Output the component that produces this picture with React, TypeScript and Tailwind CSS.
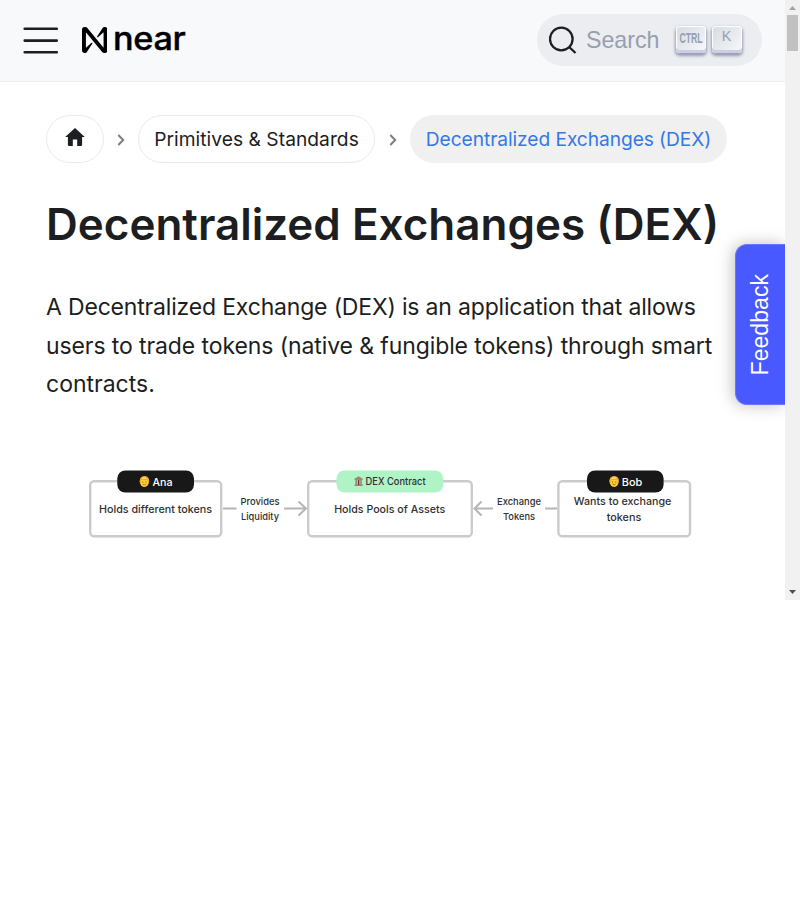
function NearMark() {
  return (
    <svg className="-mt-px h-[26px] w-[25.5px]" viewBox="0 0 24 24" preserveAspectRatio="none" fill="#000">
      <path d="M21.443 0c-.89 0-1.714.46-2.18 1.218l-5.017 7.448a.533.533 0 0 0 .792.7l4.938-4.282a.2.2 0 0 1 .334.151v13.41a.2.2 0 0 1-.354.128L5.03.905A2.555 2.555 0 0 0 3.078 0h-.521A2.557 2.557 0 0 0 0 2.557v18.886a2.557 2.557 0 0 0 4.736 1.338l5.017-7.448a.533.533 0 0 0-.792-.7l-4.938 4.283a.2.2 0 0 1-.333-.152V5.352a.2.2 0 0 1 .354-.128l14.924 17.87c.486.574 1.2.905 1.952.906h.521A2.558 2.558 0 0 0 24 21.445V2.557A2.558 2.558 0 0 0 21.443 0Z" />
    </svg>
  );
}

const keyClass =
  "-mt-px flex h-[27px] w-[30px] shrink-0 items-start justify-center rounded-[4px] bg-linear-[-225deg,#d5dbe4,#f8f8f8] text-[#969faf] shadow-[inset_0_-3px_0_0_#cdcde6,inset_0_0_1px_1px_#fff,0_2px_3px_1px_rgba(30,35,90,0.4)]";

function Navbar() {
  return (
    <header className="flex h-[82px] shrink-0 items-center border-b border-[#eeeff1] bg-[#f7f9fb] pr-[23px] pl-[22px]">
      <button aria-label="Menu" className="h-9 w-9">
        <svg width="38" height="36" viewBox="0 0 38 36" fill="none" stroke="#1c1e21" strokeWidth="2.6" strokeLinecap="round">
          <path d="M2.7 5.8H34.8M2.7 17.6H34.8M2.7 29.2H34.8" />
        </svg>
      </button>
      <a className="ml-[23.5px] flex items-center">
        <NearMark />
        <span className="-mt-[4px] ml-[5.5px] h-9 origin-left scale-x-[1.07] font-['Inter',sans-serif] text-[32px] leading-9 font-medium tracking-[-0.3px] text-black [-webkit-text-stroke:0.4px_#000]">
          near
        </span>
      </a>
      <div className="-mt-px ml-auto flex h-[52px] w-[225px] items-center rounded-full bg-[#ebedf0] pl-3">
        <svg width="28" height="30" viewBox="0 0 28 30" fill="none" stroke="#1c1e21" strokeWidth="2.3">
          <circle cx="12.3" cy="14" r="11.3" />
          <path d="M20.2 22L26.5 28" />
        </svg>
        <span className="ml-[9px] w-[90px] font-['Liberation_Sans',Arial,sans-serif] text-[23.2px] leading-7 text-[#969faf]">
          Search
        </span>
        <span className={keyClass}>
          <span className="origin-center scale-x-[0.58] font-['Liberation_Sans',Arial,sans-serif] text-[15px] leading-6 font-bold">CTRL</span>
        </span>
        <span className={"ml-[5.5px] " + keyClass}>
          <span className="font-['Liberation_Sans',Arial,sans-serif] text-[14.4px] leading-[21px]">K</span>
        </span>
      </div>
    </header>
  );
}

function Chevron() {
  return (
    <svg className="mx-[13px] mt-0.5" width="8" height="12" viewBox="0 0 8 12" fill="none" stroke="#7d7d7d" strokeWidth="2">
      <path d="M1.3 1L6.2 6L1.3 11" />
    </svg>
  );
}

function Breadcrumbs() {
  return (
    <nav className="flex h-12 items-center font-['Inter',sans-serif] text-[19.2px] text-[#1c1e21]">
      <a className="flex h-12 w-[58px] items-center justify-center rounded-full border border-[#ebebeb]">
        <svg className="-mt-1" width="20" height="18" viewBox="0 0 20 18" fill="#1c1e21">
          <path d="M10 0L19.8 9H17.1V16.8Q17.1 18 15.9 18H12.2V11.6H7.8V18H4.1Q2.9 18 2.9 16.8V9H.2Z" />
        </svg>
      </a>
      <Chevron />
      <a className="mr-px flex h-12 w-[237px] items-center justify-center rounded-full border border-[#ebebeb] tracking-[0.04px] whitespace-nowrap">
        Primitives &amp; Standards
      </a>
      <Chevron />
      <a className="flex h-12 w-[317px] items-center justify-center rounded-full bg-[#f0f0f0] tracking-[-0.08px] whitespace-nowrap text-[#3578e5]">
        Decentralized Exchanges (DEX)
      </a>
    </nav>
  );
}

function Face({ x }: { x: number }) {
  return (
    <g transform={`translate(${x} 476)`}>
      <ellipse cx="4.7" cy="5.5" rx="4.7" ry="5.2" fill="#f3b51b" />
      <ellipse cx="4.7" cy="6.2" rx="3.5" ry="4.6" fill="#ffcb38" />
      <path d="M0 6Q-.2 0 4.8 0Q9.8 0 9.4 6Q8.3 5.4 7.8 3.5Q4 4.5 1.6 3.2Q1.3 5.3 0 6Z" fill="#f5a81c" />
      <path d="M2 2.4Q4.6 .2 7.4 2.2Q5 3.5 2 2.4Z" fill="#ffe08a" />
      <circle cx="3.1" cy="6" r=".55" fill="#6b4a16" />
      <circle cx="6.4" cy="6" r=".55" fill="#6b4a16" />
      <path d="M3.2 8.3Q4.7 9.3 6.2 8.3" stroke="#8a5415" strokeWidth=".7" fill="none" />
    </g>
  );
}

function Diagram() {
  return (
    <svg className="block" width="692" height="90" viewBox="46 460 692 90" fontFamily="Inter, sans-serif" textAnchor="middle" fill="#303030">
      <g fill="#fff" stroke="#cbcbcb" strokeWidth="2.4">
        <rect x="90.2" y="481.2" width="131" height="55" rx="4" />
        <rect x="308.2" y="481.2" width="163.6" height="55" rx="4" />
        <rect x="558.4" y="481.2" width="131.6" height="55" rx="4" />
      </g>
      <g fill="none" stroke="#b5b5b5" strokeWidth="2">
        <path d="M223 508.5H236.5M284 508.5H306M298.5 501.5L306 508.5L298.5 515.5" />
        <path d="M493 508.5H474.5M481.5 501.5L474.5 508.5L481.5 515.5M545 508.5H557" />
      </g>
      <rect x="117.3" y="470.5" width="76.7" height="22" rx="8" fill="#181818" />
      <rect x="336.5" y="470.5" width="106.7" height="22" rx="8" fill="#aff4c6" />
      <rect x="587" y="470.5" width="76.6" height="22" rx="8" fill="#181818" />
      <Face x={139.7} />
      <Face x={609.4} />
      <g fill="#a18672">
        <path d="M354.5 478.8L358.6 476.3L362.7 478.8V480H354.5ZM354.5 484.6H362.7V486H354.5Z" />
        <path d="M355.4 480H357V485H355.4ZM360.2 480H361.8V485H360.2Z" />
        <path d="M357.8 480H359.4V485H357.8Z" fill="#5b3e35" />
      </g>
      <g fontSize="11" fontWeight="500">
        <text x="162.5" y="485.6" fill="#fff" textLength="20" lengthAdjust="spacingAndGlyphs">Ana</text>
        <text x="632" y="485.6" fill="#fff" textLength="20.5" lengthAdjust="spacingAndGlyphs">Bob</text>
      </g>
      <text x="395.6" y="485.4" fontSize="10.2" fontWeight="500" textLength="60" lengthAdjust="spacingAndGlyphs">DEX Contract</text>
      <g fontSize="11" fontWeight="500">
        <text x="155.5" y="512.7" textLength="113" lengthAdjust="spacingAndGlyphs">Holds different tokens</text>
        <text x="389.7" y="512.7" textLength="111" lengthAdjust="spacingAndGlyphs">Holds Pools of Assets</text>
        <text x="622.6" y="504.7" textLength="97.5" lengthAdjust="spacingAndGlyphs">Wants to exchange</text>
        <text x="624" y="520.8" textLength="34.5" lengthAdjust="spacingAndGlyphs">tokens</text>
      </g>
      <g fontSize="9.6" fontWeight="500">
        <text x="260" y="505.4" textLength="39" lengthAdjust="spacingAndGlyphs">Provides</text>
        <text x="260" y="519.6" textLength="38" lengthAdjust="spacingAndGlyphs">Liquidity</text>
        <text x="519" y="505.4" textLength="44" lengthAdjust="spacingAndGlyphs">Exchange</text>
        <text x="519" y="519.6" textLength="32" lengthAdjust="spacingAndGlyphs">Tokens</text>
      </g>
    </svg>
  );
}

function Scrollbar() {
  return (
    <div className="flex w-[15px] shrink-0 flex-col items-center bg-[#f1f1f1]">
      <svg width="15" height="15" viewBox="0 0 15 15" fill="#a3a3a3">
        <path d="M4 10H11L7.5 6Z" />
      </svg>
      <div className="h-9 w-[11px] bg-[#c1c1c1]" />
      <svg className="mt-auto" width="15" height="15" viewBox="0 0 15 15" fill="#505050">
        <path d="M4 5H11L7.5 9Z" />
      </svg>
    </div>
  );
}

export default function App() {
  return (
    <div className="h-[900px] w-[800px] bg-white">
      <div className="relative flex h-[600px] overflow-hidden">
        <div className="flex w-[785px] flex-col bg-white">
          <Navbar />
          <main className="flex flex-col pt-[33px] pl-[46px] font-['Inter',sans-serif] text-[#1c1e21]">
            <Breadcrumbs />
            <h1 className="mt-8 text-[44px] leading-[58px] font-semibold whitespace-nowrap">Decentralized Exchanges (DEX)</h1>
            <p className="mt-[35.4px] text-[23px] leading-[38.4px] whitespace-nowrap">
              <span className="tracking-[-0.18px]">A Decentralized Exchange (DEX) is an application that allows</span>
              <br />
              <span className="tracking-[-0.1px]">users to trade tokens (native &amp; fungible tokens) through smart</span>
              <br />
              contracts.
            </p>
            <div className="mt-[56.4px]">
              <Diagram />
            </div>
          </main>
        </div>
        <Scrollbar />
        <button className="absolute top-[244px] right-[15px] flex h-[161px] w-[50px] items-center justify-center rounded-l-[12px] border border-r-0 border-[#6876ff] bg-[#485aff] pr-0.5 shadow-[-2px_0_16px_rgba(0,0,0,0.25)] [clip-path:inset(-30px_0_-30px_-30px)]">
          <span className="rotate-180 font-['Liberation_Sans',Arial,sans-serif] text-[23.1px] leading-7 text-white [writing-mode:vertical-rl]">
            Feedback
          </span>
        </button>
      </div>
    </div>
  );
}
